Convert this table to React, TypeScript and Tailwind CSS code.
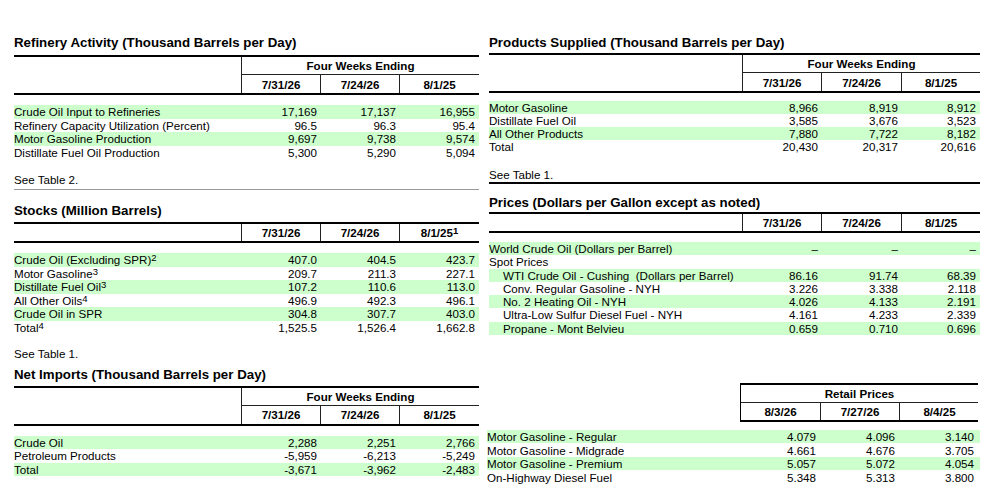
import React from "react";
import clsx from "clsx";

type Row = {
  label: string;
  sup?: string;
  indent?: boolean;
  green?: boolean;
  values?: string[];
};

const LEFT_COLS = "grid-cols-[227px_79px_79px_80px]";
const RIGHT_COLS = "grid-cols-[253px_79px_80px_79px]";

function Sup({ children }: { children: React.ReactNode }) {
  return <span className="relative -top-[3px] text-[9.5px] leading-none">{children}</span>;
}

function Title({ children, className }: { children: React.ReactNode; className?: string }) {
  return <div className={clsx("h-[16px] text-[13.3px] leading-[16px] font-bold whitespace-nowrap", className)}>{children}</div>;
}

function Head({
  cols,
  group,
  dates,
  dateH,
  className,
}: {
  cols: string;
  group?: string;
  dates: React.ReactNode[];
  dateH: string;
  className?: string;
}) {
  return (
    <div className={clsx("grid border-y-2 border-black", cols, className)}>
      <div className={group ? "row-span-2" : ""} />
      {group && (
        <div className="col-span-3 h-[18px] flex items-center justify-center border-l border-b border-[#222] font-bold">
          {group}
        </div>
      )}
      {dates.map((d, i) => (
        <div key={i} className={clsx("flex items-center justify-center border-l border-[#222] font-bold", dateH)}>
          {d}
        </div>
      ))}
    </div>
  );
}

function DataRows({ cols, rowH, rows, className }: { cols: string; rowH: string; rows: Row[]; className?: string }) {
  return (
    <div className={className}>
      {rows.map((r, i) => (
        <div key={i} className={clsx("grid items-center", cols, rowH, r.green && "bg-[#ccffcc]")}>
          <div className={clsx("whitespace-pre", r.indent && "pl-[14px]")}>
            {r.label}
            {r.sup && <Sup>{r.sup}</Sup>}
          </div>
          {r.values?.map((v, j) => (
            <div key={j} className={clsx("text-right", j === 2 ? "pr-[4px]" : "pr-[3px]")}>
              {v}
            </div>
          ))}
        </div>
      ))}
    </div>
  );
}

const refinery: Row[] = [
  { label: "Crude Oil Input to Refineries", green: true, values: ["17,169", "17,137", "16,955"] },
  { label: "Refinery Capacity Utilization (Percent)", values: ["96.5", "96.3", "95.4"] },
  { label: "Motor Gasoline Production", green: true, values: ["9,697", "9,738", "9,574"] },
  { label: "Distillate Fuel Oil Production", values: ["5,300", "5,290", "5,094"] },
];

const stocks: Row[] = [
  { label: "Crude Oil (Excluding SPR)", sup: "2", green: true, values: ["407.0", "404.5", "423.7"] },
  { label: "Motor Gasoline", sup: "3", values: ["209.7", "211.3", "227.1"] },
  { label: "Distillate Fuel Oil", sup: "3", green: true, values: ["107.2", "110.6", "113.0"] },
  { label: "All Other Oils", sup: "4", values: ["496.9", "492.3", "496.1"] },
  { label: "Crude Oil in SPR", green: true, values: ["304.8", "307.7", "403.0"] },
  { label: "Total", sup: "4", values: ["1,525.5", "1,526.4", "1,662.8"] },
];

const imports: Row[] = [
  { label: "Crude Oil", green: true, values: ["2,288", "2,251", "2,766"] },
  { label: "Petroleum Products", values: ["-5,959", "-6,213", "-5,249"] },
  { label: "Total", green: true, values: ["-3,671", "-3,962", "-2,483"] },
];

const products: Row[] = [
  { label: "Motor Gasoline", green: true, values: ["8,966", "8,919", "8,912"] },
  { label: "Distillate Fuel Oil", values: ["3,585", "3,676", "3,523"] },
  { label: "All Other Products", green: true, values: ["7,880", "7,722", "8,182"] },
  { label: "Total", values: ["20,430", "20,317", "20,616"] },
];

const prices: Row[] = [
  { label: "World Crude Oil (Dollars per Barrel)", green: true, values: ["–", "–", "–"] },
  { label: "Spot Prices" },
  { label: "WTI Crude Oil - Cushing  (Dollars per Barrel)", indent: true, green: true, values: ["86.16", "91.74", "68.39"] },
  { label: "Conv. Regular Gasoline - NYH", indent: true, values: ["3.226", "3.338", "2.118"] },
  { label: "No. 2 Heating Oil - NYH", indent: true, green: true, values: ["4.026", "4.133", "2.191"] },
  { label: "Ultra-Low Sulfur Diesel Fuel - NYH", indent: true, values: ["4.161", "4.233", "2.339"] },
  { label: "Propane - Mont Belvieu", indent: true, green: true, values: ["0.659", "0.710", "0.696"] },
];

const retail: Row[] = [
  { label: "Motor Gasoline - Regular", green: true, values: ["4.079", "4.096", "3.140"] },
  { label: "Motor Gasoline - Midgrade", values: ["4.661", "4.676", "3.705"] },
  { label: "Motor Gasoline - Premium", green: true, values: ["5.057", "5.072", "4.054"] },
  { label: "On-Highway Diesel Fuel", values: ["5.348", "5.313", "3.800"] },
];

const weeks = ["7/31/26", "7/24/26", "8/1/25"];

export default function App() {
  return (
    <div className="w-[994px] h-[498px] overflow-hidden bg-white text-black font-['Liberation_Sans',Arial,sans-serif] text-[11.6px] leading-[13px]">
      <div className="flex gap-[10px] pl-[14px] pt-[35px]">
        {/* left column */}
        <div className="w-[465px] flex flex-col">
          <Title>Refinery Activity (Thousand Barrels per Day)</Title>
          <Head cols={LEFT_COLS} group="Four Weeks Ending" dates={weeks} dateH="h-[18px]" className="mt-[4px]" />
          <DataRows cols={LEFT_COLS} rowH="h-[13.5px]" rows={refinery} className="mt-[10px]" />
          <div className="mt-[13.5px] pb-[3.5px] border-b border-[#9a9a9a]">See Table 2.</div>

          <Title className="mt-[13px]">Stocks (Million Barrels)</Title>
          <Head
            cols={LEFT_COLS}
            dates={["7/31/26", "7/24/26", <span key="d">8/1/25<Sup>1</Sup></span>]}
            dateH="h-[17px]"
            className="mt-[3px]"
          />
          <DataRows cols={LEFT_COLS} rowH="h-[13.5px]" rows={stocks} className="mt-[10px]" />
          <div className="mt-[12.5px]">See Table 1.</div>

          <Title className="mt-[7px]">Net Imports (Thousand Barrels per Day)</Title>
          <Head cols={LEFT_COLS} group="Four Weeks Ending" dates={weeks} dateH="h-[18px]" className="mt-[3px]" />
          <DataRows cols={LEFT_COLS} rowH="h-[13.3px]" rows={imports} className="mt-[10.5px]" />
        </div>

        {/* right column */}
        <div className="w-[491px] flex flex-col">
          <Title>Products Supplied (Thousand Barrels per Day)</Title>
          <Head cols={RIGHT_COLS} group="Four Weeks Ending" dates={weeks} dateH="h-[18px]" className="mt-[2px]" />
          <DataRows cols={RIGHT_COLS} rowH="h-[13px]" rows={products} className="mt-[8px]" />
          <div className="mt-[15px] pb-[1px] border-b-2 border-black">See Table 1.</div>

          <Title className="mt-[11px]">Prices (Dollars per Gallon except as noted)</Title>
          <Head cols={RIGHT_COLS} dates={weeks} dateH="h-[17px]" className="mt-[1px]" />
          <DataRows cols={RIGHT_COLS} rowH="h-[13.25px]" rows={prices} className="mt-[9px]" />

          <div className="-ml-[2px] mt-[48px] grid grid-cols-[253px_238px]">
            <div />
            <div className="border-y-2 border-l border-black">
              <div className="h-[18px] flex items-center justify-center border-b border-[#222] font-bold">Retail Prices</div>
              <div className="grid grid-cols-[79px_79px_80px] h-[17px]">
                {["8/3/26", "7/27/26", "8/4/25"].map((d, i) => (
                  <div key={d} className={clsx("flex items-center justify-center font-bold", i > 0 && "border-l border-[#222]")}>
                    {d}
                  </div>
                ))}
              </div>
            </div>
          </div>
          <DataRows cols="grid-cols-[253px_79px_79px_80px]" rowH="h-[13.5px]" rows={retail} className="-ml-[2px] mt-[8px]" />
        </div>
      </div>
    </div>
  );
}
